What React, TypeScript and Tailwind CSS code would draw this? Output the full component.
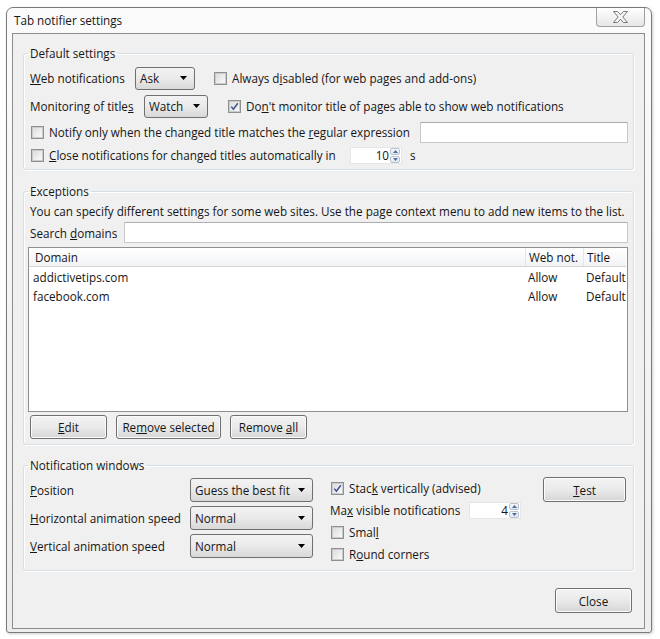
import React from "react";

function Check({ checked = false, className = "" }: { checked?: boolean; className?: string }) {
  return (
    <span className={"w-[13px] h-[13px] shrink-0 border border-[#8e8f8f] bg-white flex items-center justify-center " + className}>
      <span className="w-[11px] h-[11px] border border-[#c9cbcd] bg-linear-to-br from-[#dcdcdc] to-[#fafafa] flex items-center justify-center">
        {checked && (
          <svg width="9" height="9" viewBox="0 0 9 9">
            <path d="M1.3 4.6 L3.4 7.2 L7.8 1.2" stroke="#3f5294" strokeWidth="1.5" fill="none" />
          </svg>
        )}
      </span>
    </span>
  );
}

function Arrow() {
  return (
    <svg width="7" height="4" viewBox="0 0 7 4" className="shrink-0">
      <path d="M0 0 H7 L3.5 4 Z" fill="#000" />
    </svg>
  );
}

function Select({ children, className = "" }: { children: React.ReactNode; className?: string }) {
  return (
    <div
      className={
        "flex items-center border border-[#707070] rounded-[3px] bg-linear-to-b from-[#f3f3f3] via-[#eaeaea] to-[#d8d8d8] pl-[4px] pr-[7px] shrink-0 " +
        className
      }
    >
      <span className="flex-1 whitespace-nowrap">{children}</span>
      <Arrow />
    </div>
  );
}

function Button({ children, className = "" }: { children: React.ReactNode; className?: string }) {
  return (
    <div
      className={
        "flex items-center justify-center border border-[#707070] rounded-[3px] bg-linear-to-b from-[#f3f3f3] via-[#eaeaea] to-[#d6d6d6] shadow-[inset_0_0_0_1px_#fbfbfb] shrink-0 " +
        className
      }
    >
      <span className="whitespace-nowrap">{children}</span>
    </div>
  );
}

function Spinner({ value, className = "" }: { value: string; className?: string }) {
  return (
    <div className={"h-[17px] flex items-center bg-white border border-[#e6e6e6] shrink-0 " + className}>
      <span className="flex-1 text-right pr-[1px]">{value}</span>
      <div className="w-[10px] h-[15px] flex flex-col gap-[1px] mr-[1px]">
        <div className="flex-1 flex items-center justify-center border border-[#b9c3d0] rounded-[2px] bg-linear-to-b from-[#f6f8fb] to-[#dfe6ef]">
          <svg width="5" height="3" viewBox="0 0 5 3">
            <path d="M0 3 H5 L2.5 0 Z" fill="#4d6b9c" />
          </svg>
        </div>
        <div className="flex-1 flex items-center justify-center border border-[#b9c3d0] rounded-[2px] bg-linear-to-b from-[#f6f8fb] to-[#dfe6ef]">
          <svg width="5" height="3" viewBox="0 0 5 3">
            <path d="M0 0 H5 L2.5 3 Z" fill="#4d6b9c" />
          </svg>
        </div>
      </div>
    </div>
  );
}

function Legend({ children }: { children: React.ReactNode }) {
  return <legend className="-ml-[2px] px-[2px] h-[16px]">{children}</legend>;
}

const fieldsetCls =
  "border border-[#d5dfe5] rounded-[3px] shadow-[inset_1px_1px_0_#ffffff,1px_1px_0_#ffffff] pl-[6px] pr-[4px]";

export default function App() {
  return (
    <div className="w-[660px] h-[639px] bg-white pl-[6px] pt-[7px] font-['Open_Sans',sans-serif] text-[11.7px] leading-[16px] text-[#161616]">
      <div className="w-[646px] h-[626px] border border-[#7a7a7a] rounded-t-[7px] rounded-b-[3px] bg-linear-to-b from-[#fbfbfb] to-[#ededed] flex flex-col pl-[5px] pr-[6px] shadow-[1px_1px_3px_rgba(0,0,0,0.2)]">
        {/* title bar */}
        <div className="h-[25px] flex items-start shrink-0">
          <span className="ml-[2px] mt-[4px]">Tab notifier settings</span>
          <div className="ml-auto w-[49px] h-[19px] border-x border-b border-[#a0a0a0] rounded-b-[4px] bg-linear-to-b from-[#ffffff] to-[#e6e6e6] flex items-center justify-center">
            <svg width="15" height="12" viewBox="0 0 15 12">
              <polygon
                points="0.5,0.5 4.5,0.5 7.5,3.8 10.5,0.5 14.5,0.5 9.8,6 14.5,11.5 10.5,11.5 7.5,8.2 4.5,11.5 0.5,11.5 5.2,6"
                fill="#f7f7f7"
                stroke="#777"
                strokeWidth="1"
                strokeLinejoin="round"
              />
            </svg>
          </div>
        </div>

        {/* client area */}
        <div className="w-[633px] h-[596px] border border-[#8d8d8d] bg-[#f0f0f0] px-[10px] flex flex-col shrink-0">
          {/* Default settings */}
          <fieldset className={fieldsetCls + " mt-[11px] pb-[3px]"}>
            <Legend>Default settings</Legend>
            <div className="mt-[5px] h-[24px] flex items-center">
              <span className="w-[105px] whitespace-nowrap">
                <u>W</u>eb notifications
              </span>
              <Select className="w-[60px] h-[23px]">Ask</Select>
              <Check className="ml-[19px]" />
              <span className="ml-[5px] whitespace-nowrap">
                Always d<u>i</u>sabled (for web pages and add-ons)
              </span>
            </div>
            <div className="mt-[4px] h-[24px] flex items-center">
              <span className="w-[114px] whitespace-nowrap">
                Monitoring of title<u>s</u>
              </span>
              <Select className="w-[64px] h-[23px]">Watch</Select>
              <Check checked className="ml-[20px]" />
              <span className="ml-[5px] whitespace-nowrap">
                Do<u>n</u>'t monitor title of pages able to show web notifications
              </span>
            </div>
            <div className="mt-[3px] h-[22px] flex items-center">
              <Check className="ml-[1px]" />
              <span className="ml-[5px] whitespace-nowrap">
                Notify only when the changed title matches the <u>r</u>egular expression
              </span>
              <div className="ml-auto mr-[1px] w-[208px] h-[21px] bg-white border border-[#c5c7cb] border-t-[#abadb3]" />
            </div>
            <div className="mt-[1px] h-[22px] flex items-center">
              <Check className="ml-[1px]" />
              <span className="ml-[5px] w-[301px] whitespace-nowrap">
                <u>C</u>lose notifications for changed titles automatically in
              </span>
              <Spinner value="10" className="w-[52px]" />
              <span className="ml-[8px]">s</span>
            </div>
          </fieldset>

          {/* Exceptions */}
          <fieldset className={fieldsetCls + " mt-[13px] pb-[5px]"}>
            <Legend>Exceptions</Legend>
            <div className="mt-[4px] h-[16px] whitespace-nowrap">
              You can specify different settings for some web sites. Use the page context menu to add new items to the list.
            </div>
            <div className="mt-[3px] h-[21px] flex items-center">
              <span className="w-[94px] whitespace-nowrap">
                Search <u>d</u>omains
              </span>
              <div className="flex-1 mr-[1px] h-[21px] bg-white border border-[#c5c7cb] border-t-[#abadb3]" />
            </div>
            <div className="mt-[4px] -ml-[2px] mr-[1px] h-[165px] border border-[#8e8f91] bg-white overflow-hidden flex flex-col">
              <div className="h-[19px] w-[597px] shrink-0 flex border-b border-[#d5d5d5] bg-linear-to-b from-[#ffffff] to-[#f2f3f5] whitespace-nowrap">
                <div className="w-[496px] pl-[6px] flex items-center">Domain</div>
                <div className="w-[58px] border-l border-[#e3e5e8] pl-[3px] flex items-center">Web not.</div>
                <div className="flex-1 border-l border-[#e3e5e8] pl-[3px] flex items-center overflow-hidden">Title</div>
              </div>
              {[
                ["addictivetips.com", "Allow", "Default"],
                ["facebook.com", "Allow", "Default"],
              ].map(([d, w, t]) => (
                <div key={d} className="h-[19px] w-[597px] shrink-0 flex whitespace-nowrap">
                  <div className="w-[497px] pl-[4px] flex items-center">{d}</div>
                  <div className="w-[58px] pl-[2px] flex items-center">{w}</div>
                  <div className="flex-1 pl-[2px] flex items-center overflow-hidden">{t}</div>
                </div>
              ))}
            </div>
            <div className="mt-[3px] flex gap-[9px]">
              <Button className="w-[77px] h-[24px]">
                <u>E</u>dit
              </Button>
              <Button className="w-[105px] h-[24px]">
                Re<u>m</u>ove selected
              </Button>
              <Button className="w-[77px] h-[24px]">
                Remove <u>a</u>ll
              </Button>
            </div>
          </fieldset>

          {/* Notification windows */}
          <fieldset className={fieldsetCls + " mt-[12px] pb-[5px] pr-[6px]"}>
            <Legend>Notification windows</Legend>
            <div className="mt-[4px] flex items-start">
              <div className="mt-[1px] flex flex-col gap-[4px]">
                <div className="h-[24px] flex items-center">
                  <span className="w-[160px] whitespace-nowrap">
                    <u>P</u>osition
                  </span>
                  <Select className="w-[123px] h-[24px]">Guess the best fit</Select>
                </div>
                <div className="h-[24px] flex items-center">
                  <span className="w-[160px] whitespace-nowrap">
                    <u>H</u>orizontal animation speed
                  </span>
                  <Select className="w-[123px] h-[24px]">Normal</Select>
                </div>
                <div className="h-[24px] flex items-center">
                  <span className="w-[160px] whitespace-nowrap">
                    <u>V</u>ertical animation speed
                  </span>
                  <Select className="w-[123px] h-[24px]">Normal</Select>
                </div>
              </div>
              <div className="ml-[17px] w-[213px] flex flex-col">
                <div className="h-[22px] flex items-center">
                  <Check checked className="ml-[1px]" />
                  <span className="ml-[5px] whitespace-nowrap">
                    Stac<u>k</u> vertically (advised)
                  </span>
                </div>
                <div className="h-[22px] flex items-center">
                  <span className="w-[139px] whitespace-nowrap">
                    Ma<u>x</u> visible notifications
                  </span>
                  <Spinner value="4" className="w-[52px]" />
                </div>
                <div className="h-[22px] flex items-center">
                  <Check className="ml-[1px]" />
                  <span className="ml-[5px] whitespace-nowrap">
                    Smal<u>l</u>
                  </span>
                </div>
                <div className="h-[22px] flex items-center">
                  <Check className="ml-[1px]" />
                  <span className="ml-[5px] whitespace-nowrap">
                    R<u>o</u>und corners
                  </span>
                </div>
              </div>
              <Button className="w-[83px] h-[25px]">
                <u>T</u>est
              </Button>
            </div>
          </fieldset>

          <div className="mt-[17px] flex justify-end mr-[2px]">
            <Button className="w-[77px] h-[25px]">Close</Button>
          </div>
        </div>
      </div>
    </div>
  );
}
